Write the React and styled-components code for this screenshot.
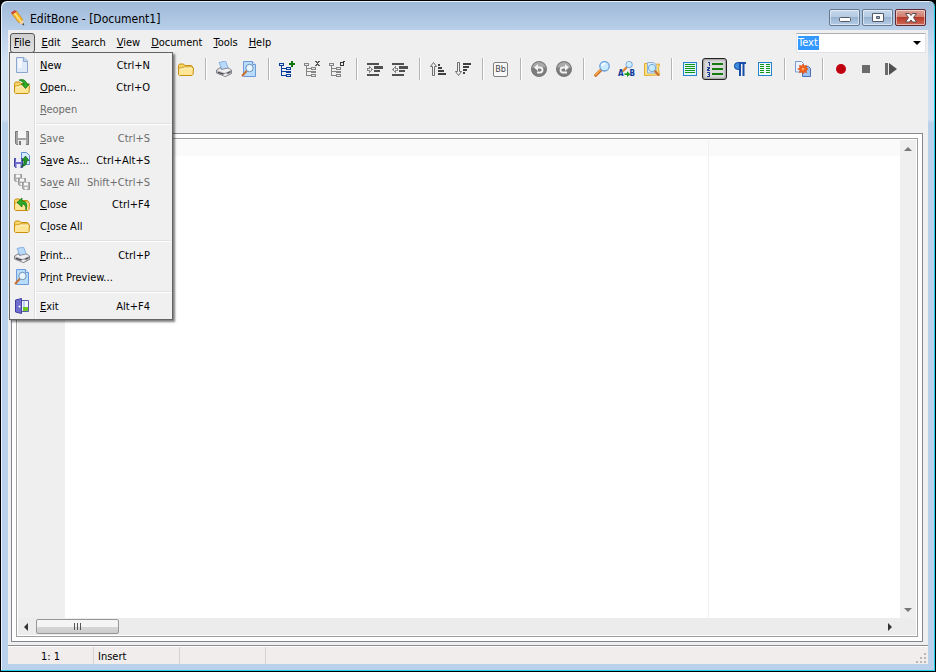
import React from 'react';
import styled, { createGlobalStyle } from 'styled-components';

const GlobalStyle = createGlobalStyle`
  * {
    box-sizing: border-box;
  }
  body {
    margin: 0;
    background: #000000;
    font-family: 'DejaVu Sans Condensed', Tahoma, sans-serif;
    font-size: 11px;
    color: #000000;
  }
  button, select, textarea {
    font: inherit;
    color: inherit;
  }
`;

const crisp = ['lines', 'columns', 'numbers', 'indent', 'outdent', 'treeAdd', 'treeRemove', 'treeEdit', 'stop'];

const Icon = ({ name, size = 16 }) => (
  <svg
    width={size}
    height={size}
    viewBox="0 0 16 16"
    aria-hidden="true"
    shapeRendering={crisp.includes(name) ? 'crispEdges' : 'auto'}
  >
    {icons[name]}
  </svg>
);

const folder = (
  <>
    <path d="M.5 13.500v-9l1-1.500h4l1.500 1.500h6.500l1 1v8z" fill="#f8d468" stroke="#c8900f" />
    <path d="M1.500 14.500l-1-1V8l1-1h3l1-1h8.500l1.500 1-.5 6.500-1 1z" fill="#ffe596" stroke="#c8900f" />
    <path d="M2 8h3l1-1h8" fill="none" stroke="#fff6cf" />
  </>
);

const tree = (color) => (
  <>
    <path d="M0 2h5v3H0zM7 6h5v3H7zM7 10h5v2H7zM7 13h5v3H7z" fill={color} />
    <path d="M1 3h3v1H1zM8 7h3v1H8zM8 14h3v1H8z" fill="#dfe8f5" />
    <path d="M2 5h1v10H2zM2 7h5v1H2zM2 10h5v1H2zM2 14h5v1H2z" fill={color} />
  </>
);

const disc = (
  <>
    <circle cx="8" cy="8" r="7.800" fill="#7d7d7d" />
    <path d="M.8 7a7.300 7.300 0 0 1 14.400 0q-7-2.500-14.400 0z" fill="#a9a9a9" />
    <circle cx="8" cy="8" r="7.500" fill="none" stroke="#6b6b6b" strokeWidth=".6" />
  </>
);

const lens = (
  <>
    <path d="M6.500 9.500L1.700 14.300" stroke="#c0651c" strokeWidth="3" strokeLinecap="round" />
    <path d="M6.200 9.200L1.500 13.900" stroke="#ffa646" strokeWidth="1.500" strokeLinecap="round" />
    <circle cx="10.500" cy="5.300" r="4.700" fill="#c9ebff" stroke="#6a9fd8" strokeWidth="1.300" />
    <path d="M7.800 5q1-2.500 3.500-2.500" stroke="#ffffff" strokeWidth="1.300" fill="none" />
  </>
);

const disk = (
  <>
    <path d="M.5.500h7v7h-6l-1-1z" fill="#b3b3b3" stroke="#8b8b8b" strokeWidth=".8" />
    <path d="M2 .5h4v3H2zM2.500 5h3v2.500h-3z" fill="#f8f8f8" />
  </>
);

const icons = {
  pencil: (
    <>
      <path d="M8 13l7 2-3-4z" fill="#777777" opacity=".4" />
      <path d="M2 4l4.500-3 6.500 9-4 3z" fill="#fbb829" stroke="#bd7b10" strokeWidth=".6" />
      <path d="M4.500 3l6.500 9" stroke="#ffe384" strokeWidth="1.400" />
      <path d="M1 2.500l4-2.500 1.500 1.800-4.200 2.700z" fill="#cf4638" />
      <path d="M9 13l4-3 .8 5z" fill="#f5d6a5" />
      <path d="M12 14.200l1.600-1.200.4 2.500z" fill="#333333" />
    </>
  ),
  file: (
    <>
      <path d="M2.500.5h7.500l3.500 3.500v11.500h-11z" fill="#dfeaf8" stroke="#8ca6cf" />
      <path d="M4 2h4v9H4z" fill="#ffffff" opacity=".6" />
      <path d="M9.500.5v4h4" fill="#bdd3ee" stroke="#8ca6cf" />
    </>
  ),
  open: (
    <>
      {folder}
      <path d="M5 1q6-2 8 4h2.500l-4 4.500-4-4.500h2.500Q9 2 5 1z" fill="#2dab27" stroke="#11700f" strokeWidth=".7" />
    </>
  ),
  close: (
    <>
      {folder}
      <path d="M12 14q3-9-4-9V2L3 6.500 8 11V8q4 0 4 6z" fill="#2dab27" stroke="#11700f" strokeWidth=".7" />
    </>
  ),
  folder,
  save: (
    <>
      <path d="M1.500 1.500h13v13h-12l-1-1z" fill="#a3a3a3" stroke="#777777" />
      <path d="M4 1h8v7H4z" fill="#f6f6f6" />
      <path d="M4 10h8v5H4z" fill="#ededed" />
      <path d="M5 11h2v4H5z" fill="#777777" />
    </>
  ),
  saveAs: (
    <>
      <path d="M7.500.5h5l3 3v9h-8z" fill="#d9ebff" stroke="#5d8dcf" />
      <path d="M.5 6.500h8v9h-7l-1-1z" fill="#6e6cc8" stroke="#4442a0" />
      <path d="M2 6h5v4H2zM2.500 12h4v4h-4z" fill="#ececfa" />
      <path d="M7 14.500q3 0 3-6H8L11.500 4 15 8.500h-2q0 6-6 6z" fill="#22952b" stroke="#0b6214" strokeWidth=".7" />
    </>
  ),
  saveAll: (
    <>
      <g>{disk}</g>
      <g transform="translate(4 4)">{disk}</g>
      <g transform="translate(8 8)">{disk}</g>
    </>
  ),
  print: (
    <>
      <path d="M3 1.500l6.500-1.500 3 7.500-6.500 1.500z" fill="#b9d9fb" stroke="#7aa5dc" strokeWidth=".8" />
      <path d="M.5 9l4-2.500 1 2 7-1.500 3 2v3.500l-6 3-9-3.500z" fill="#bcbcc2" stroke="#707078" strokeWidth=".8" />
      <path d="M1 9.200l3.500-1.700 1 1.500 6.500-1.500 3 1.500-6 3z" fill="#efeff2" />
      <path d="M2 11.300l7 2.200 5.500-3" fill="none" stroke="#44444c" strokeWidth="1.300" />
      <path d="M6 14l4-2 3.500 1.500-4.500 2z" fill="#f4f7fb" stroke="#777777" strokeWidth=".6" />
    </>
  ),
  preview: (
    <>
      <path d="M2.500.5h9l3 3v12h-12z" fill="#b9dcfc" stroke="#6b9bdb" />
      <path d="M11.500.5v3h3" fill="#e4f1ff" stroke="#6b9bdb" />
      <path d="M6 9.500l-4.500 5" stroke="#c97031" strokeWidth="2" strokeLinecap="round" />
      <circle cx="8.500" cy="7" r="3.700" fill="#e8f7ff" stroke="#6b8fb5" />
    </>
  ),
  exit: (
    <>
      <path d="M7.500 2.500h7v11h-7z" fill="#f2f6fc" stroke="#5d5da8" />
      <path d="M9 9h5v4H9z" fill="#6ccc26" />
      <path d="M9 3h2v6H9z" fill="#b8d3f3" />
      <path d="M1.500 2l6-1.500v15l-6-1.500z" fill="#706fce" stroke="#4241a0" />
      <circle cx="5.500" cy="8.500" r="1" fill="#ffffff" />
    </>
  ),
  treeAdd: (
    <>
      {tree('#0b3f9e')}
      <path d="M10 2h6v2h-6zM12 0h2v6h-2z" fill="#12740f" />
    </>
  ),
  treeRemove: (
    <>
      {tree('#858585')}
      <path d="M11 0h2v1h1V0h2v1h-1v1h-1v1h1v1h1v1h-2V4h-1v1h-2V4h1V3h1V2h-1V1h-1z" fill="#555555" />
    </>
  ),
  treeEdit: (
    <>
      {tree('#858585')}
      <path d="M11 1h3V0h2v1h-1v4h-4zM12 2v2h2V2z" fillRule="evenodd" fill="#333333" />
    </>
  ),
  indent: (
    <>
      <path d="M0 2h12v2H0zM7 5h9v3H7zM7 9h6v2H7zM0 13h12v2H0z" fill="#505050" />
      <path d="M0 7h2V5h1v1h1v1h1v1h1v1H5v1H4v1H3v1H2v-2H0z" fill="#858585" />
      <path d="M1 8h2V7h1v3H3V9H1z" fill="#eeeeee" />
    </>
  ),
  outdent: (
    <>
      <path d="M0 2h12v2H0zM7 5h9v3H7zM7 9h6v2H7zM0 13h12v2H0z" fill="#505050" />
      <path d="M6 7H4V5H3v1H2v1H1v1H0v1h1v1h1v1h1v1h1v-2h2z" fill="#858585" />
      <path d="M5 8H3V7H2v3h1V9h2z" fill="#eeeeee" />
    </>
  ),
  sortAsc: (
    <>
      <path d="M2.500 14.500v-9h-2l3-4 3 4h-2v9z" fill="#eeeeee" stroke="#707070" />
      <path d="M8 3h2v2H8zM8 6h4v2H8zM8 9h6v2H8zM8 12h8v2H8z" fill="#404040" />
    </>
  ),
  sortDesc: (
    <>
      <path d="M2.500 1.500v9h-2l3 4 3-4h-2v-9z" fill="#eeeeee" stroke="#707070" />
      <path d="M8 2h8v2H8zM8 5h6v2H8zM8 8h4v2H8zM8 11h2v2H8z" fill="#404040" />
    </>
  ),
  undo: (
    <>
      {disc}
      <path d="M5.500 6.500H9a2.500 2.500 0 0 1 0 5H6" fill="none" stroke="#f3f3f3" strokeWidth="1.800" />
      <path d="M3 6.500L7 3v7z" fill="#f3f3f3" />
    </>
  ),
  redo: (
    <>
      {disc}
      <path d="M10.500 6.500H7a2.500 2.500 0 0 0 0 5h4" fill="none" stroke="#f3f3f3" strokeWidth="1.800" />
      <path d="M13 6.500L9 3v7z" fill="#f3f3f3" />
    </>
  ),
  search: lens,
  replace: (
    <>
      <g transform="translate(3 0) scale(.68)">{lens}</g>
      <path d="M5.500 12.300h2.500v-2l3.500 2.900-3.500 2.800v-2H5.500z" fill="#189a1d" />
    </>
  ),
  findFiles: (
    <>
      <path d="M.5 2.500h3l1-1h5v2l6-.5-1 4.500 1 6.500-15 .5z" fill="#ffdf78" stroke="#e0aa34" />
      <path d="M3.500 1.500h6l2.500 2v8.500h-8.500z" fill="#dcecff" stroke="#8fb0dd" />
      <path d="M10.500 9.500l4 4.500" stroke="#ca6b29" strokeWidth="2" strokeLinecap="round" />
      <circle cx="8" cy="7" r="3.600" fill="#c8ecff" stroke="#76a8d5" />
    </>
  ),
  lines: (
    <>
      <path d="M1 1h14v14H1z" fill="#2684cf" />
      <path d="M2 2h12v12H2z" fill="#dff5ff" />
      <path d="M3 3h10v1H3zM3 5h10v1H3zM3 7h10v1H3zM3 9h10v1H3zM3 11h10v1H3z" fill="#109416" />
    </>
  ),
  columns: (
    <>
      <path d="M1 1h14v14H1z" fill="#2684cf" />
      <path d="M2 2h12v12H2z" fill="#eefaff" />
      <path d="M3 3h4v1H3zM3 5h4v1H3zM3 7h4v1H3zM3 9h4v1H3zM3 11h4v1H3zM9 3h4v1H9zM9 5h4v1H9zM9 7h4v1H9zM9 9h4v1H9zM9 11h4v1H9z" fill="#109416" />
    </>
  ),
  numbers: (
    <>
      <path d="M5 2h11v2H5zM5 7h11v2H5zM5 12h11v2H5z" fill="#147a12" />
      <path d="M1 1h2v4H2V2H1zM0 6h3v2H2v1h1v1H0V8h1V7H0zM0 11h3v5H0v-1h2v-1H1v-1h1v-1H0z" fill="#1c3f9e" />
    </>
  ),
  pilcrow: (
    <>
      <path d="M14 1v2h-1.500v12h-2V3H9v12H7V9Q2 9 2 5t5-4z" fill="#174fa8" />
      <path d="M7 2v6Q3 8 3 5t4-3z" fill="#3d8de0" />
    </>
  ),
  compare: (
    <>
      <path d="M.5.500h6l2 2v8.500h-8z" fill="#eaf3ff" stroke="#7b9bd0" />
      <path d="M7.500 5.500h6l2 2v8h-8z" fill="#9dc2f2" stroke="#4a70b8" />
      <path
        d="M8 3l1.300 2 2.400-.7-.6 2.400 2.200 1.300-2.200 1.300.6 2.400-2.400-.7L8 13l-1.300-2-2.400.7.6-2.400L2.700 8l2.200-1.300-.6-2.400 2.400.7z"
        fill="#f1601b"
        stroke="#cf4308"
        strokeWidth=".5"
      />
      <circle cx="8" cy="8" r="1.200" fill="#ffb07a" />
    </>
  ),
  record: <circle cx="8" cy="8" r="5" fill="#c00010" />,
  stop: <path d="M4 4h8v8H4z" fill="#6b6b6b" />,
  play: (
    <>
      <path d="M2 2h3v12H2z" fill="#6b6b6b" />
      <path d="M6 2l8 6-8 6z" fill="#505050" />
    </>
  ),
};

const menus = ['File', 'Edit', 'Search', 'View', 'Document', 'Tools', 'Help'];

const fileMenu = [
  [
    { before: '', key: 'N', after: 'ew', shortcut: 'Ctrl+N', icon: 'file' },
    { before: '', key: 'O', after: 'pen...', shortcut: 'Ctrl+O', icon: 'open' },
    { before: '', key: 'R', after: 'eopen', disabled: true },
  ],
  [
    { before: '', key: 'S', after: 'ave', shortcut: 'Ctrl+S', icon: 'save', disabled: true },
    { before: 'S', key: 'a', after: 've As...', shortcut: 'Ctrl+Alt+S', icon: 'saveAs' },
    { before: 'Sa', key: 'v', after: 'e All', shortcut: 'Shift+Ctrl+S', icon: 'saveAll', disabled: true },
    { before: '', key: 'C', after: 'lose', shortcut: 'Ctrl+F4', icon: 'close' },
    { before: 'C', key: 'l', after: 'ose All', icon: 'folder' },
  ],
  [
    { before: '', key: 'P', after: 'rint...', shortcut: 'Ctrl+P', icon: 'print' },
    { before: 'Pr', key: 'i', after: 'nt Preview...', icon: 'preview' },
  ],
  [{ before: '', key: 'E', after: 'xit', shortcut: 'Alt+F4', icon: 'exit' }],
];

const toolGroups = [
  [['file', 'New'], ['open', 'Open']],
  [['save', 'Save'], ['saveAs', 'Save As'], ['saveAll', 'Save All'], ['close', 'Close'], ['folder', 'Close All']],
  [['print', 'Print'], ['preview', 'Print Preview']],
  [['treeAdd', 'Add node'], ['treeRemove', 'Remove node'], ['treeEdit', 'Edit node']],
  [['indent', 'Increase Indent'], ['outdent', 'Decrease Indent']],
  [['sortAsc', 'Sort Ascending'], ['sortDesc', 'Sort Descending']],
  [['case', 'Toggle Case']],
  [['undo', 'Undo'], ['redo', 'Redo']],
  [['search', 'Search'], ['replace', 'Replace'], ['findFiles', 'Find in Files']],
  [['lines', 'Word Wrap'], ['numbers', 'Line Numbers'], ['pilcrow', 'Special Characters'], ['columns', 'Selection Mode']],
  [['compare', 'Compare Files']],
  [['record', 'Record Macro'], ['stop', 'Stop Macro'], ['play', 'Play Macro']],
];

const App = () => {
  return (
    <Window>
      <GlobalStyle />
      <TitleBar>
        <Icon name="pencil" />
        <Title>EditBone - [Document1]</Title>
        <WindowButton aria-label="Minimize">
          <svg width="14" height="10"><rect x="1.500" y="4.500" width="11" height="4" rx="1" fill="#fff" stroke="#555b66" /></svg>
        </WindowButton>
        <WindowButton aria-label="Maximize">
          <svg width="14" height="10"><path d="M1.500.5h11v8h-11zM5.500 3.500v2h3v-2z" fillRule="evenodd" fill="#fff" stroke="#555b66" /></svg>
        </WindowButton>
        <WindowButton aria-label="Close" $danger>
          <svg width="14" height="10"><path d="M1.500.5h4L7 2.500 8.500.5h4L9.500 4.500l3 4.500h-4L7 7 5.500 9h-4l3-4.500z" fill="#fff" stroke="#5b4a50" /></svg>
        </WindowButton>
      </TitleBar>

      <Client>
        <MenuBar>
          {menus.map((menu) => (
            <MenuButton key={menu} $open={menu === 'File'} aria-expanded={menu === 'File'}>
              <u>{menu[0]}</u>{menu.slice(1)}
            </MenuButton>
          ))}
          <LanguageBox>
            <LanguageSelect aria-label="Highlighter" defaultValue="Text">
              <option>Text</option>
            </LanguageSelect>
            <LanguageValue aria-hidden="true">Text</LanguageValue>
            <svg width="8" height="4" aria-hidden="true"><path d="M0 0h8L4 4z" /></svg>
          </LanguageBox>
          <Menu role="menu">
            {fileMenu.map((group, i) => (
              <MenuGroup key={i}>
                {group.map((item) => (
                  <MenuItem key={item.before + item.key + item.after} role="menuitem" disabled={item.disabled}>
                    <MenuIcon>{item.icon && <Icon name={item.icon} />}</MenuIcon>
                    <span>{item.before}<u>{item.key}</u>{item.after}</span>
                    <Shortcut>{item.shortcut}</Shortcut>
                  </MenuItem>
                ))}
              </MenuGroup>
            ))}
          </Menu>
        </MenuBar>

        <ToolBar>
          {toolGroups.map((group, i) => (
            <ToolGroup key={i}>
              {group.map(([icon, label]) => (
                <ToolButton key={icon} aria-label={label} $pressed={icon === 'numbers'}>
                  {icon === 'case' ? <CaseGlyph>Bb</CaseGlyph> : <Icon name={icon} />}
                  {icon === 'replace' && <ReplaceGlyph><span>A</span><span>B</span></ReplaceGlyph>}
                </ToolButton>
              ))}
            </ToolGroup>
          ))}
        </ToolBar>

        <TabPage>
          <Editor>
            <Gutter />
            <TextPane>
              <TextInput aria-label="Document1" spellCheck={false} />
              <MarginLine />
            </TextPane>
            <VerticalBar>
              <svg width="8" height="4"><path d="M0 4h8L4 0z" fill="#777" /></svg>
              <svg width="8" height="4"><path d="M0 0h8L4 4z" fill="#777" /></svg>
            </VerticalBar>
            <HorizontalBar>
              <svg width="4" height="8"><path d="M4 0v8L0 4z" fill="#333" /></svg>
              <Thumb><i /><i /><i /></Thumb>
              <svg width="4" height="8"><path d="M0 0v8l4-4z" fill="#333" /></svg>
            </HorizontalBar>
          </Editor>
        </TabPage>

        <StatusBar>
          <StatusCell $center>1: 1</StatusCell>
          <StatusCell>Insert</StatusCell>
          <StatusCell />
          <Grip width="12" height="12" viewBox="0 0 12 12">
            <path d="M8 1h2v2H8zM4 5h2v2H4zM8 5h2v2H8zM0 9h2v2H0zM4 9h2v2H4zM8 9h2v2H8z" fill="#b9b5b3" />
          </Grip>
        </StatusBar>
      </Client>
    </Window>
  );
};

const Window = styled.div`
  display: flex;
  flex-direction: column;
  min-height: 100vh;
  padding: 0 6px 7px;
  border: 1px solid #000000;
  border-radius: 7px 7px 0 0;
  background: linear-gradient(#9db8d7 0, #bad0ea 30px, #d3e2f3 60px, #d3e2f3 118px, #b9d1ea 122px);
  box-shadow: inset -1px -1px 0 #1fd0ee, inset 1px 1px 0 #e6f1fc;
`;

const TitleBar = styled.header`
  display: flex;
  align-items: center;
  height: 29px;
  padding: 4px 3px 0;
  gap: 2px;
`;

const Title = styled.h1`
  flex: 1;
  margin: 0;
  padding: 2px 0 0 2px;
  font-size: 12px;
  font-weight: normal;
`;

const WindowButton = styled.button`
  display: flex;
  align-items: center;
  justify-content: center;
  width: 31px;
  height: 17px;
  padding: 0;
  border: 1px solid ${(props) => (props.$danger ? '#5e2a35' : '#63798f')};
  border-radius: 2px;
  background: ${(props) =>
    props.$danger
      ? 'linear-gradient(#dda397 0, #cf7a6c 50%, #b83b29 50%, #cf6a57)'
      : 'linear-gradient(#c6d8ec 0, #b3c9e2 50%, #98b3d1 50%, #b5cce6)'};
  box-shadow: inset 0 0 0 1px rgba(255, 255, 255, 0.5);
`;

const Client = styled.main`
  display: flex;
  flex: 1;
  flex-direction: column;
  margin: 0 1px;
  background: #efefef;
`;

const MenuBar = styled.nav`
  position: relative;
  display: flex;
  align-items: center;
  gap: 3px;
  height: 25px;
  padding: 0 2px;
`;

const MenuButton = styled.button`
  height: 20px;
  padding: 0 3px;
  border: 1px solid ${(props) => (props.$open ? '#555555' : 'transparent')};
  border-radius: 3px;
  background: ${(props) => (props.$open ? 'linear-gradient(#cfcfcf, #e2e2e2)' : 'none')};
`;

const LanguageBox = styled.div`
  position: relative;
  display: flex;
  align-items: center;
  justify-content: space-between;
  width: 130px;
  height: 20px;
  margin-left: auto;
  padding: 0 4px 0 1px;
  border: 1px solid #e2e3ea;
  border-top-color: #abadb3;
  background: #ffffff;
`;

const LanguageSelect = styled.select`
  position: absolute;
  inset: 0;
  width: 100%;
  opacity: 0;
`;

const LanguageValue = styled.span`
  padding-right: 1px;
  line-height: 14px;
  background: #3399ff;
  color: #ffffff;
`;

const Menu = styled.div`
  position: absolute;
  z-index: 2;
  top: 22px;
  left: 1px;
  width: 164px;
  padding: 1px 1px 2px;
  border: 1px solid #646464;
  background: linear-gradient(90deg, #f1f1f1 24px, #dddddd 24px, #dddddd 25px, #ffffff 25px, #ffffff 26px, #f0f0f0 26px);
  box-shadow: 2px 2px 2px rgba(0, 0, 0, 0.5);
`;

const MenuGroup = styled.div`
  & + & {
    margin-top: 3px;
    padding-top: 4px;
    background:
      linear-gradient(#e0e0e0, #e0e0e0) 26px 0 / 100% 1px no-repeat,
      linear-gradient(#ffffff, #ffffff) 26px 1px / 100% 1px no-repeat;
  }
`;

const MenuItem = styled.button`
  display: flex;
  align-items: center;
  width: 100%;
  height: 22px;
  padding: 0 21px 0 3px;
  border: 0;
  background: none;
  text-align: left;
  white-space: nowrap;

  &:disabled {
    color: #6d6d6d;
  }
`;

const MenuIcon = styled.span`
  display: flex;
  flex-shrink: 0;
  width: 26px;
`;

const Shortcut = styled.span`
  margin-left: auto;
`;

const ToolBar = styled.div`
  display: flex;
  flex-shrink: 0;
  height: 78px;
  padding: 3px 0 0 2px;
`;

const ToolGroup = styled.div`
  display: flex;
  height: 22px;

  & + & {
    margin-left: 7px;
    padding-left: 5px;
    border-left: 1px solid #b5b5b5;
    box-shadow: inset 1px 0 0 #ffffff;
  }
`;

const ToolButton = styled.button`
  position: relative;
  display: flex;
  align-items: center;
  justify-content: center;
  width: 25px;
  height: 22px;
  padding: 0;
  border: ${(props) => (props.$pressed ? '1px solid #222222' : '0')};
  border-radius: 3px;
  background: ${(props) => (props.$pressed ? '#dadada' : 'none')};
  box-shadow: ${(props) => (props.$pressed ? 'inset 0 0 2px 1px rgba(0, 0, 0, 0.3)' : 'none')};
`;

const CaseGlyph = styled.span`
  width: 15px;
  border: 1px solid #808080;
  border-radius: 2px;
  background: #f8f8f8;
  color: #444444;
  font-size: 9px;
  line-height: 13px;
`;

const ReplaceGlyph = styled.span`
  position: absolute;
  right: 4px;
  bottom: 2px;
  left: 4px;
  display: flex;
  justify-content: space-between;
  color: #0b3a9c;
  font-size: 8px;
  font-weight: bold;
  line-height: 8px;
`;

const TabPage = styled.section`
  display: flex;
  flex: 1;
  margin: 0 5px 3px 3px;
  padding: 4px;
  border: 1px solid #828790;
  background: #ffffff;
`;

const Editor = styled.div`
  display: grid;
  flex: 1;
  grid-template-columns: 47px 1fr 16px;
  grid-template-rows: 1fr 17px;
  padding: 1px;
  border: 1px solid #a0a0a0;
  background: #ffffff;
`;

const Gutter = styled.div`
  background: #efefef;
`;

const TextPane = styled.div`
  position: relative;
  display: flex;
  background: linear-gradient(#fafafa 16px, #ffffff 16px);
`;

const TextInput = styled.textarea`
  flex: 1;
  padding: 0 2px;
  border: 0;
  outline: 0;
  background: none;
  font-family: 'Liberation Mono', monospace;
  font-size: 13px;
  line-height: 16px;
  resize: none;
`;

const MarginLine = styled.div`
  position: absolute;
  top: 0;
  bottom: 0;
  left: 643px;
  border-left: 1px solid #f0f0f0;
`;

const VerticalBar = styled.div`
  display: flex;
  flex-direction: column;
  align-items: center;
  justify-content: space-between;
  padding: 7px 0 6px;
  background: #efefef;
`;

const HorizontalBar = styled.div`
  display: flex;
  grid-column: 1 / -1;
  align-items: center;
  padding: 0 24px 0 6px;
  background: #ececec;

  & > svg:last-child {
    margin-left: auto;
  }
`;

const Thumb = styled.div`
  display: flex;
  align-items: center;
  justify-content: center;
  gap: 2px;
  width: 83px;
  height: 15px;
  margin-left: 8px;
  border: 1px solid #979797;
  border-radius: 2px;
  background: linear-gradient(#f4f4f4 50%, #d7d7d7 50%, #cccccc);

  i {
    width: 1px;
    height: 7px;
    background: #555555;
  }
`;

const StatusBar = styled.footer`
  display: flex;
  align-items: center;
  height: 19px;
  border-top: 1px solid #8c8c8c;
  background: #f1edec;
  box-shadow: inset 0 1px 0 #ffffff;
`;

const StatusCell = styled.span`
  width: 86px;
  height: 17px;
  padding: 2px 4px 0;
  border-right: 1px solid #d7d3d1;
  line-height: 16px;
  text-align: ${(props) => (props.$center ? 'center' : 'left')};
`;

const Grip = styled.svg`
  align-self: flex-end;
  margin-left: auto;
`;

export default App;
